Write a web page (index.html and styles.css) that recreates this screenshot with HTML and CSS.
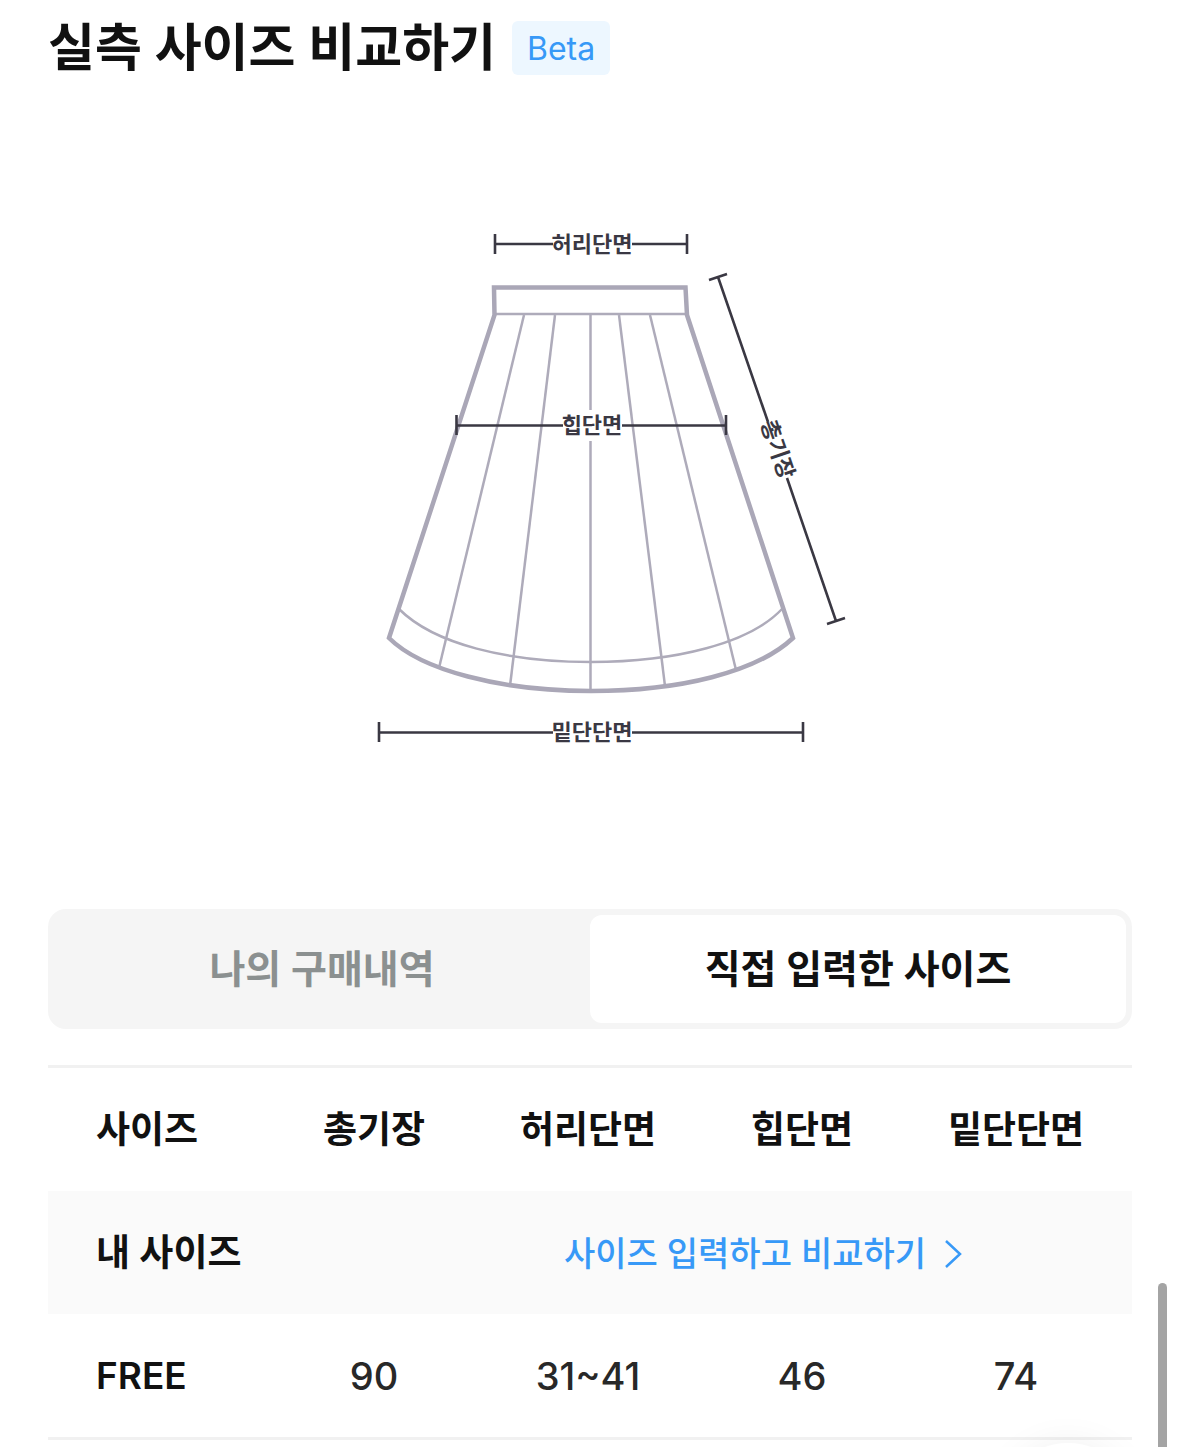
FILE: index.html
```
<!DOCTYPE html>
<html lang="ko">
<head>
    <meta charset="UTF-8">
    <meta name="viewport" content="width=device-width, initial-scale=1">
    <title>실측 사이즈 비교하기</title>
    <link rel="stylesheet" href="styles.css">
</head>
<body>

<main class="size-compare">
    <header class="title-row">
        <h1>실측 사이즈 비교하기</h1>
        <span class="badge">Beta</span>
    </header>

    <div class="figure">
        <svg class="skirt" viewBox="330 220 520 530" role="img" aria-label="스커트 실측 부위">
            <!-- pleats -->
            <g class="thin">
                <path d="M494 314H687"/>
                <path d="M524 315L439 668"/>
                <path d="M555 315L510 686"/>
                <path d="M590.5 315V410M590.5 441V690"/>
                <path d="M619 315L665 686"/>
                <path d="M650 315L736 670"/>
                <path d="M399 609C434 644 507 662 591 662C676 662 750 643 782 609"/>
            </g>
            <!-- outline -->
            <path class="outline" d="M494 287.5H685.5L687 315L793 638C757 672 680 691 591 691C500 691 421 670 389 638L494.5 315Z"/>
            <!-- measuring lines -->
            <g class="measure">
                <path d="M495 234V254M495 244H553M632 244H687M687 234V254"/>
                <path d="M456.500 415V435M456.500 425.500H563M622 425.500H726M726 415V435"/>
                <path d="M379 722V742M379 732.500H553M632 732.500H803M803 722V742"/>
                <path d="M709 280L727 274M718 277L768 422M787 478L836 621M827 624L845 618"/>
            </g>
            <g class="label">
                <text x="592" y="252">허리단면</text>
                <text x="592" y="433">힙단면</text>
                <text x="592" y="740">밑단단면</text>
                <text transform="translate(778 449) rotate(71)" x="0" y="8">총기장</text>
            </g>
        </svg>
    </div>

    <div class="tabs" role="tablist">
        <button type="button" role="tab" aria-selected="false">나의 구매내역</button>
        <button type="button" role="tab" aria-selected="true" class="active">직접 입력한 사이즈</button>
    </div>

    <table class="size-table">
        <thead>
            <tr>
                <th scope="col">사이즈</th>
                <th scope="col">총기장</th>
                <th scope="col">허리단면</th>
                <th scope="col">힙단면</th>
                <th scope="col">밑단단면</th>
            </tr>
        </thead>
        <tbody>
            <tr class="mine">
                <th scope="row">내 사이즈</th>
                <td colspan="4" class="input-cell">
                    <a href="#">사이즈 입력하고 비교하기
                        <svg class="chevron" viewBox="0 0 18 30" aria-hidden="true"><path d="M2 2L16 15L2 28"/></svg>
                    </a>
                </td>
            </tr>
            <tr>
                <th scope="row">FREE</th>
                <td>90</td>
                <td>31~41</td>
                <td>46</td>
                <td>74</td>
            </tr>
        </tbody>
    </table>
</main>

<button type="button" class="top-button" aria-label="맨 위로"></button>
<div class="scroll-thumb"></div>

</body>
</html>
```

FILE: styles.css
```
* {
    box-sizing: border-box;
}
body {
    margin: 0;
    background: #fff;
    color: #111;
    font-family: Inter, "Noto Sans CJK KR", sans-serif;
}
button {
    border: 0;
    font-family: inherit;
}
.size-compare {
    padding: 12px 47px 0 48px;
}
.title-row {
    display: flex;
    align-items: center;
    gap: 16px;
    height: 72px;
}
h1 {
    margin: 0;
    font-size: 51px;
    font-weight: 600;
    line-height: 72px;
}
.badge {
    height: 54px;
    padding: 0 15px;
    border-radius: 6px;
    background: #edf7ff;
    color: #3799f7;
    font-size: 32px;
    line-height: 56px;
}
.figure {
    display: flex;
    justify-content: center;
    padding: 136px 0 159px;
}
.skirt {
    width: 520px;
    max-width: 100%;
}
.skirt path {
    fill: none;
}
.thin {
    stroke: #aeabba;
    stroke-width: 2.5;
}
.outline {
    stroke: #aaa7b7;
    stroke-width: 4.5;
}
.measure {
    stroke: #3a3843;
    stroke-width: 2.6;
}
.label {
    fill: #3a3843;
    font-size: 22px;
    font-weight: 600;
    text-anchor: middle;
}
.tabs {
    display: flex;
    height: 120px;
    padding: 6px;
    border-radius: 18px;
    background: #f5f5f5;
}
.tabs button {
    flex: 1;
    padding: 0 0 6px;
    border-radius: 12px;
    background: transparent;
    color: #8b9090;
    font-size: 39px;
    font-weight: 600;
}
.tabs .active {
    background: #fff;
    color: #111;
}
.size-table {
    width: 100%;
    margin-top: 36px;
    border-top: 3px solid #f1f1f1;
    border-bottom: 3px solid #f1f1f1;
    border-spacing: 0;
    table-layout: fixed;
}
.size-table th,
.size-table td {
    height: 123px;
    padding: 0;
    text-align: center;
    font-size: 37px;
    line-height: 48px;
}
.size-table th {
    font-weight: 600;
}
.size-table td {
    color: #282828;
    font-size: 38px;
    font-weight: 500;
}
.size-table th:first-child {
    width: 219px;
    padding-left: 48px;
    text-align: left;
}
.size-table th:last-child,
.size-table td:last-child {
    width: 223px;
    padding-right: 9px;
}
.mine {
    background: #fafafa;
}
.size-table .input-cell {
    padding: 0 0 0 136px;
}
.input-cell a {
    display: inline-flex;
    align-items: center;
    gap: 18px;
    color: #3799f7;
    font-size: 34px;
    font-weight: 500;
    text-decoration: none;
}
.chevron {
    width: 18px;
    height: 30px;
    fill: none;
    stroke: #3799f7;
    stroke-width: 2.5;
}
.top-button {
    position: fixed;
    right: 45px;
    bottom: -128px;
    width: 132px;
    height: 132px;
    border-radius: 50%;
    background: #fff;
    box-shadow: 0 0 36px rgba(0, 0, 0, 0.06);
}
.scroll-thumb {
    position: fixed;
    right: 12px;
    bottom: -12px;
    width: 9px;
    height: 176px;
    border-radius: 5px;
    background: #a4a4a4;
}
```
